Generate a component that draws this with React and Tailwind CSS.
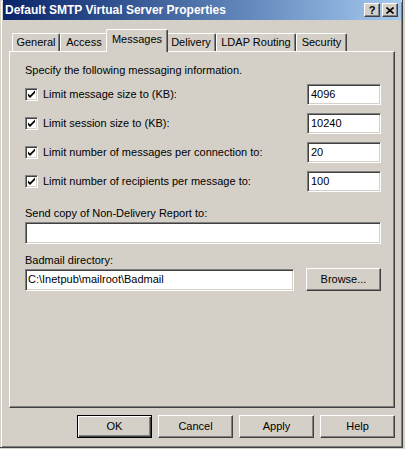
import React from 'react';

const tabs = [
  { label: 'General', w: 'w-[48px]' },
  { label: 'Access', w: 'w-[48px]' },
  { label: 'Messages', w: 'w-[62px]', active: true },
  { label: 'Delivery', w: 'w-[50px]' },
  { label: 'LDAP Routing', w: 'w-[80px]' },
  { label: 'Security', w: 'w-[51px]' },
];

const limits = [
  { label: 'Limit message size to (KB):', value: '4096' },
  { label: 'Limit session size to (KB):', value: '10240' },
  { label: 'Limit number of messages per connection to:', value: '20' },
  { label: 'Limit number of recipients per message to:', value: '100' },
];

// classic sunken edit box
const sunken =
  'bg-white border border-t-[#808080] border-l-[#808080] border-r-white border-b-white shadow-[inset_1px_1px_0_#404040,inset_-1px_-1px_0_#d4d0c8]';

// classic raised button
const raised =
  'bg-[#d4d0c8] border border-t-white border-l-white border-r-[#404040] border-b-[#404040] shadow-[inset_-1px_-1px_0_#808080]';

const Checkbox = () => (
  <div className={`w-[13px] h-[13px] shrink-0 flex items-center justify-center ${sunken}`}>
    <svg width="9" height="9" viewBox="0 0 9 9">
      <path d="M1 3.5 L3 5.5 L8 0.5 L8 3 L3 8 L1 6 Z" fill="#000" />
    </svg>
  </div>
);

const Button = ({ children, primary }) => (
  <div
    className={`w-[75px] h-[23px] flex items-center justify-center ${
      primary
        ? 'bg-[#d4d0c8] border border-black shadow-[inset_1px_1px_0_#fff,inset_-1px_-1px_0_#404040,inset_-2px_-2px_0_#808080]'
        : raised
    }`}
  >
    {children}
  </div>
);

export default function App() {
  return (
    <div className="w-[405px] h-[449px] bg-[#d4d0c8] overflow-hidden font-['Liberation_Sans',Arial,sans-serif] text-[11px] leading-[13px] text-black">
      <div className="w-[403px] h-[448px] flex flex-col pl-[3px] pr-[1px] border-r border-b border-r-[#404040] border-b-[#404040] shadow-[inset_1px_1px_0_#d4d0c8,inset_2px_2px_0_#fff,inset_-1px_-1px_0_#808080]">
        {/* title bar */}
        <div className="h-[20px] flex items-center justify-between pl-[2px] pr-[3px] bg-gradient-to-r from-[#0a246a] to-[#a6caf0]">
          <span className="text-white font-bold text-[12px]">Default SMTP Virtual Server Properties</span>
          <div className="flex gap-[2px]">
            <div className={`w-[16px] h-[14px] flex items-center justify-center font-bold text-[11px] leading-none ${raised}`}>?</div>
            <div className={`w-[16px] h-[14px] flex items-center justify-center ${raised}`}>
              <svg width="8" height="7" viewBox="0 0 8 7">
                <path d="M0.5 0.5 L7.5 6.5 M7.5 0.5 L0.5 6.5" stroke="#000" strokeWidth="1.6" />
              </svg>
            </div>
          </div>
        </div>

        {/* tab strip */}
        <div className="mt-[9px] ml-[9px] h-[22px] flex items-end relative z-10">
          {tabs.map((t) =>
            t.active ? (
              <div
                key={t.label}
                className={`${t.w} -mx-[2px] h-[23px] -mb-[1px] pb-[3px] flex items-center justify-center bg-[#d4d0c8] border-t border-l border-t-white border-l-white border-r border-r-[#404040] rounded-t-[2px] shadow-[inset_-1px_0_0_#808080] relative z-10`}
              >
                {t.label}
              </div>
            ) : (
              <div
                key={t.label}
                className={`${t.w} h-[18px] flex items-center justify-center bg-[#d4d0c8] border-t border-l border-t-white border-l-white border-r border-r-[#404040] rounded-t-[2px] shadow-[inset_-1px_0_0_#808080]`}
              >
                {t.label}
              </div>
            )
          )}
        </div>

        {/* panel */}
        <div className="ml-[6px] w-[386px] h-[357px] flex flex-col pt-[12px] pl-[15px] pr-[13px] border-t border-l border-t-white border-l-white border-r border-b border-r-[#404040] border-b-[#404040] shadow-[inset_-1px_-1px_0_#808080]">
          <div>Specify the following messaging information.</div>

          <div className="mt-[7px] flex flex-col gap-[8px]">
            {limits.map((l) => (
              <div key={l.label} className="h-[21px] flex items-center">
                <Checkbox />
                <span className="ml-[5px] flex-1">{l.label}</span>
                <div className={`w-[74px] h-[21px] flex items-center pl-[3px] ${sunken}`}>{l.value}</div>
              </div>
            ))}
          </div>

          <div className="mt-[15px]">Send copy of Non-Delivery Report to:</div>
          <div className={`mt-[2px] h-[22px] ${sunken}`} />

          <div className="mt-[10px]">Badmail directory:</div>
          <div className="mt-[1px] flex items-center justify-between">
            <div className={`w-[269px] h-[22px] flex items-center pl-[2px] ${sunken}`}>C:\Inetpub\mailroot\Badmail</div>
            <Button>Browse...</Button>
          </div>
        </div>

        {/* dialog buttons */}
        <div className="mt-[7px] w-[392px] flex justify-end gap-[6px]">
          <Button primary>OK</Button>
          <Button>Cancel</Button>
          <Button>Apply</Button>
          <Button>Help</Button>
        </div>
      </div>
    </div>
  );
}
